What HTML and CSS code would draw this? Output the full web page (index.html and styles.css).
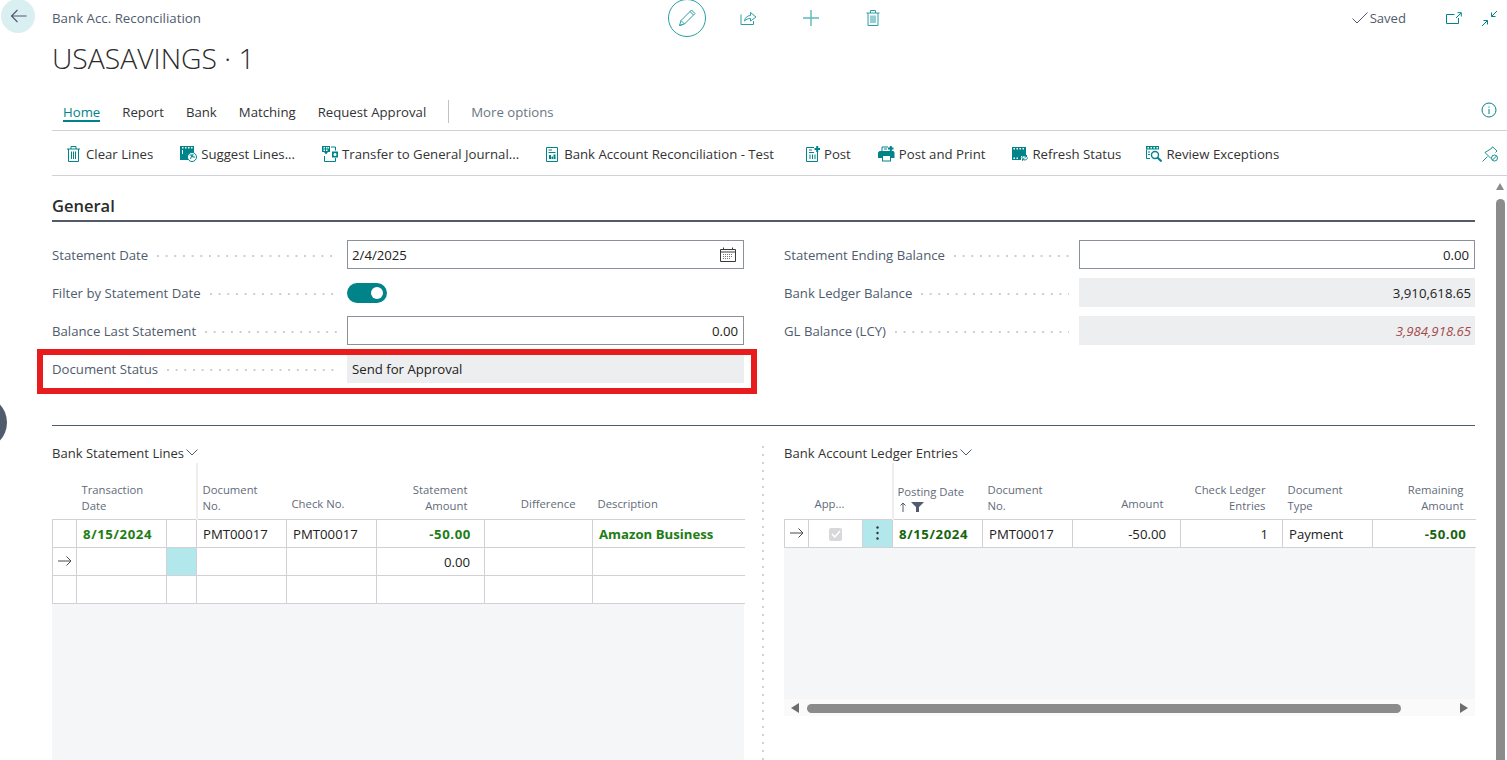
FILE: index.html
```html
<!DOCTYPE html>
<html lang="en">
<head>
<meta charset="utf-8">
<title>Bank Acc. Reconciliation</title>
<link rel="stylesheet" href="styles.css">
</head>
<body>
<div class="page">
  <aside class="gutter">
    <button class="back" aria-label="Back">
      <svg width="17" height="14" viewBox="0 0 17 14" fill="none" stroke="#505c6d" stroke-width="1.2"><path d="M16.500 7H1.500M7.500 1 1.500 7l6 6"/></svg>
    </button>
  </aside>
  <main class="main">
    <header class="top">
      <div class="crumb">Bank Acc. Reconciliation</div>
      <div class="top-actions">
        <span class="edit">
          <svg width="20" height="20" viewBox="0 0 20 20" fill="none" stroke="#2a9ea3" stroke-width="1"><path d="M2.500 17.500 4 12.500 14.500 2 18 5.500 7.500 16ZM4 12.500 7.500 16M13 3.500 16.500 7M2.500 17.500 5 16.800"/></svg>
        </span>
        <svg class="ta-share" width="17" height="16" viewBox="0 0 17 16" fill="none" stroke="#2a9ea3" stroke-width="1"><path d="M1 4.500V14.500H13.500V11M4.500 11C5 7.500 7.500 5.500 10.500 5.500V2.500L16 7 10.500 11V8.500C8 8.500 6 9.300 4.500 11Z"/></svg>
        <svg class="ta-plus" width="16" height="16" viewBox="0 0 16 16" fill="none" stroke="#5cb8bb" stroke-width="1.4"><path d="M8 0V16M0 8H16"/></svg>
        <svg class="ta-trash" width="14" height="16" viewBox="0 0 14 16" fill="none" stroke="#2a9ea3" stroke-width="1"><path d="M.5 3H13.500M4.500 3V.5H9.500V3M2 3V15.500H12V3M5 5.500V13M7 5.500V13M9 5.500V13"/></svg>
      </div>
      <div class="top-right">
        <span class="saved">
          <svg width="16" height="12" viewBox="0 0 16 12" fill="none" stroke="#505c6d" stroke-width="1"><path d="M.5 6.500 5 11 15.500 .5"/></svg>
          Saved
        </span>
        <svg class="tr-open" width="16" height="12" viewBox="0 0 16 12" fill="none" stroke="#008489" stroke-width="1"><path d="M8.500 2.500H.5V11.500H12.500V6M10 6 15 1M11.500 .7H15.300V4.500"/></svg>
        <svg class="tr-collapse" width="17" height="17" viewBox="0 0 17 17" fill="none" stroke="#008489" stroke-width="1"><path d="M16 1 10.500 6.500M10.500 2.500V6.500H14.500M1 16 6.500 10.500M2.500 10.500H6.500V14.500"/></svg>
      </div>
    </header>

    <h1 class="title">USASAVINGS · 1</h1>

    <nav class="tabs">
      <a class="tab tab-on">Home</a>
      <a class="tab">Report</a>
      <a class="tab">Bank</a>
      <a class="tab">Matching</a>
      <a class="tab">Request Approval</a>
      <span class="tab-sep"></span>
      <a class="tab tab-more">More options</a>
      <svg class="info" width="16" height="16" viewBox="0 0 16 16" fill="none" stroke="#008489" stroke-width="1"><circle cx="8" cy="8" r="7"/><path d="M8 7V12M8 4.500V5.700"/></svg>
    </nav>

    <div class="actions">
      <a class="act act-wide">
        <svg width="13" height="16" viewBox="0 0 13 16" fill="none" stroke="#008489" stroke-width="1"><path d="M0 3H13M4 3V.5H9V3M1.500 3V15.500H11.500V3M4.500 5.500V13M6.500 5.500V13M8.500 5.500V13"/></svg>
        Clear Lines
      </a>
      <a class="act">
        <svg width="17" height="16" viewBox="0 0 17 16"><path fill="#008489" d="M0 0H14V11H9.500L8 14H0Z"/><path fill="#fff" d="M2 1H3.500V2.500H2ZM5 1H6.500V2.500H5ZM8 1H9.500V2.500H8ZM11 1H12.500V2.500H11ZM2 4H3V8H2Z"/><circle cx="12" cy="11" r="4.500" fill="#fff" stroke="#008489"/><path fill="none" stroke="#008489" d="M9.500 9H12L10.500 13M13 8 12.500 11H15"/></svg>
        Suggest Lines...
      </a>
      <a class="act">
        <svg width="16" height="16" viewBox="0 0 16 16"><path fill="#008489" d="M0 0H8V6H6L4 8.500 2 6H0Z"/><path fill="#fff" d="M1.500 1H3V2.500H1.500ZM4 1H5.500V2.500H4ZM6 1H7V2.500H6ZM1.500 3.500H3V5H1.500ZM4 3.500H5.500V5H4Z"/><path fill="none" stroke="#008489" d="M9 1H13.500V4.500M2.500 10V15.500H13.500V12"/><rect x="10" y="5.500" width="6" height="6" fill="#008489"/><circle cx="13" cy="8.500" r="1.500" fill="#fff"/></svg>
        Transfer to General Journal...
      </a>
      <a class="act act-wide act-bank">
        <svg width="12" height="15" viewBox="0 0 12 15" fill="none" stroke="#008489"><path d="M.5 .5H11.500V14.500H.5ZM2.500 3H6M2.500 5.500H9.500"/><path fill="#008489" stroke="none" d="M3 8H5V12H3ZM5.500 9.500H7V12H5.500ZM7.500 7.500H9.500V12H7.500Z"/></svg>
        Bank Account Reconciliation - Test
      </a>
      <a class="act">
        <svg width="14" height="16" viewBox="0 0 14 16" fill="none" stroke="#008489"><path d="M8 1.500H.5V15.500H11.500V6M3 4H6M3 6.500H8M4 8.500V13M6.500 8.500V13M9 8.500V13"/><path stroke-width="2" d="M8.500 3H14M11.200 0V6"/></svg>
        Post
      </a>
      <a class="act">
        <svg width="17" height="16" viewBox="0 0 17 16"><path fill="#008489" d="M0 6.500 1.500 5H15.500L16.500 6.500V12H13V15.500H4V12H0Z"/><path fill="#fff" d="M5 10H12V14.500H5Z"/><path fill="none" stroke="#008489" d="M4 5V1H10M6 3H9"/><path fill="none" stroke="#008489" stroke-width="2" d="M10 2.500H15.500M12.800 0V5"/></svg>
        Post and Print
      </a>
      <a class="act act-refresh">
        <svg width="16" height="14" viewBox="0 0 16 14"><path fill="#008489" d="M0 0H14V9H9V13H0Z"/><path fill="#fff" d="M1.500 1H3V2.500H1.500ZM4.500 1H6V2.500H4.500ZM7.500 1H9V2.500H7.500ZM10.500 1H12V2.500H10.500ZM1.500 10.500H3V12H1.500ZM4.500 10.500H6V12H4.500Z"/><path fill="none" stroke="#008489" d="M10 11C10 9 12 8 14.500 9.500M15.500 10.500C15.500 12.500 13 14 10.500 12M14.500 8V10H12.500M10.500 13.800V11.800H12.500"/></svg>
        Refresh Status
      </a>
      <a class="act">
        <svg width="16" height="16" viewBox="0 0 16 16"><path fill="#008489" d="M0 0H13V3.500H0Z"/><path fill="#fff" d="M1.500 1H3V2.500H1.500ZM4.500 1H6V2.500H4.500ZM7.500 1H9V2.500H7.500ZM10.500 1H12V2.500H10.500Z"/><path fill="none" stroke="#008489" d="M.5 3.500V12.500H4M2 6H4M2 8.500H4"/><circle cx="9" cy="9" r="3.500" fill="#fff" stroke="#008489" stroke-width="1.400"/><path fill="none" stroke="#008489" stroke-width="2" d="M11.500 11.500 15.500 15.500"/></svg>
        Review Exceptions
      </a>
      <svg class="pin" width="16" height="16" viewBox="0 0 16 16" fill="none" stroke="#008489" stroke-width=".9"><path d="M.5 15.500 5.500 10.500M3 6.500 9.500 2.500 10.500 .8 15 5 13.500 6.500M3 6.500 9 12.500"/><circle cx="12.500" cy="12" r="3"/><path d="M10.500 14 14.500 10"/></svg>
    </div>

    <section class="general">
      <h2 class="section-title">General</h2>
      <div class="fields">
        <div class="field-col">
          <div class="field">
            <label class="lbl"><span>Statement Date</span><i class="dots"></i></label>
            <div class="input">2/4/2025
              <svg class="cal" width="16" height="15" viewBox="0 0 16 15" fill="none" stroke="#3a3a3a"><path d="M.5 2.500H15.500V14.500H.5ZM.5 5H15.500M3.500 .5V3M12.500 .5V3"/><path stroke="#777" stroke-dasharray="1 1" d="M3 7.500H13M3 9.500H13M3 11.500H11"/></svg>
            </div>
          </div>
          <div class="field">
            <label class="lbl"><span>Filter by Statement Date</span><i class="dots"></i></label>
            <div class="toggle"><i class="knob"></i></div>
          </div>
          <div class="field">
            <label class="lbl"><span>Balance Last Statement</span><i class="dots"></i></label>
            <div class="input num">0.00</div>
          </div>
          <div class="field">
            <label class="lbl"><span>Document Status</span><i class="dots"></i></label>
            <div class="input ro">Send for Approval</div>
          </div>
        </div>
        <div class="field-col">
          <div class="field">
            <label class="lbl"><span>Statement Ending Balance</span><i class="dots"></i></label>
            <div class="input num">0.00</div>
          </div>
          <div class="field">
            <label class="lbl"><span>Bank Ledger Balance</span><i class="dots"></i></label>
            <div class="input ro num">3,910,618.65</div>
          </div>
          <div class="field">
            <label class="lbl"><span>GL Balance (LCY)</span><i class="dots"></i></label>
            <div class="input ro num warn">3,984,918.65</div>
          </div>
        </div>
      </div>
    </section>

    <hr class="rule">

    <section class="parts">
      <div class="part">
        <div class="part-title">Bank Statement Lines
          <svg width="12" height="7" viewBox="0 0 12 7" fill="none" stroke="#505c6d"><path d="M.5 .5 6 6 11.500 .5"/></svg>
        </div>
        <table class="grid grid-l">
          <colgroup>
            <col class="c24"><col class="c90"><col class="c30"><col class="c90"><col class="c90"><col class="c108"><col class="c108"><col class="c152">
          </colgroup>
          <thead>
            <tr>
              <th></th><th class="two">Transaction<br>Date</th><th class="freeze"></th><th class="two">Document<br>No.</th><th>Check No.</th><th class="r two">Statement<br>Amount</th><th class="r">Difference</th><th>Description</th>
            </tr>
          </thead>
          <tbody>
            <tr><td></td><td class="g d">8/15/2024</td><td></td><td>PMT00017</td><td>PMT00017</td><td class="r g d">-50.00</td><td></td><td class="g">Amazon Business</td></tr>
            <tr><td class="mark"><svg width="14" height="10" viewBox="0 0 14 10" fill="none" stroke="#4a4a4a"><path d="M0 5H13M8.500 .5 13 5 8.500 9.500"/></svg></td><td></td><td class="cy"></td><td></td><td></td><td class="r">0.00</td><td></td><td></td></tr>
            <tr><td></td><td></td><td></td><td></td><td></td><td></td><td></td><td></td></tr>
          </tbody>
        </table>
        <div class="fill fill-l"></div>
      </div>
      <div class="vsep"></div>
      <div class="part">
        <div class="part-title">Bank Account Ledger Entries
          <svg width="12" height="7" viewBox="0 0 12 7" fill="none" stroke="#505c6d"><path d="M.5 .5 6 6 11.500 .5"/></svg>
        </div>
        <table class="grid grid-r">
          <colgroup>
            <col class="c24"><col class="c54"><col class="c30"><col class="c90"><col class="c90"><col class="c108"><col class="c102"><col class="c90"><col class="c103">
          </colgroup>
          <thead>
            <tr>
              <th></th><th class="app">App...</th><th class="freeze"></th><th class="two pd">Posting Date<br><span class="sort"><svg width="6" height="10" viewBox="0 0 6 10" fill="none" stroke="#505c6d"><path d="M3 10V1M.5 3.500 3 1 5.500 3.500"/></svg><svg width="13" height="10" viewBox="0 0 13 10"><path fill="#505c6d" d="M0 0H13L8 5V10H5V5Z"/></svg></span></th><th class="two">Document<br>No.</th><th class="r">Amount</th><th class="r two">Check Ledger<br>Entries</th><th class="two">Document<br>Type</th><th class="r two last">Remaining<br>Amount</th>
            </tr>
          </thead>
          <tbody>
            <tr><td class="mark"><svg width="14" height="10" viewBox="0 0 14 10" fill="none" stroke="#4a4a4a"><path d="M0 5H13M8.500 .5 13 5 8.500 9.500"/></svg></td><td class="chk"><span class="box"><svg width="10" height="8" viewBox="0 0 10 8" fill="none" stroke="#fff" stroke-width="1.500"><path d="M1 4 3.800 7 9 1"/></svg></span></td><td class="cy kebab"><svg width="3" height="14" viewBox="0 0 3 14"><circle cx="1.500" cy="1.500" r="1.200" fill="#333"/><circle cx="1.500" cy="7" r="1.200" fill="#333"/><circle cx="1.500" cy="12.500" r="1.200" fill="#333"/></svg></td><td class="g dk d">8/15/2024</td><td>PMT00017</td><td class="r">-50.00</td><td class="r">1</td><td>Payment</td><td class="r g dk d last">-50.00</td></tr>
          </tbody>
        </table>
        <div class="fill fill-r"></div>
        <div class="hbar">
          <i class="arr arr-l"></i>
          <i class="hthumb"></i>
          <i class="arr arr-r"></i>
        </div>
      </div>
    </section>
  </main>

  <div class="redbox"></div>
  <div class="bubble"></div>
  <div class="vbar"><i class="vup"></i><i class="vthumb"></i></div>
</div>
</body>
</html>
```
FILE: styles.css
```css
* { box-sizing: border-box; }
html, body { margin: 0; padding: 0; height: 760px; overflow: hidden; background: #fff; }
body { font-family: "Open Sans", "Noto Sans", sans-serif; font-size: 13.2px; color: #212121; }
.page { position: relative; display: flex; width: 1507px; height: 760px; overflow: hidden; }
.gutter { width: 52px; flex: none; }
.back { display: flex; align-items: center; justify-content: center; width: 34px; height: 34px; margin: -1px 0 0 1px; padding: 0; border: 0; border-radius: 50%; background: #d9eff2; }
.main { width: 1423px; flex: none; display: flex; flex-direction: column; }

.top { display: flex; align-items: center; height: 36px; position: relative; }
.crumb { width: 616px; color: #505c6d; font-size: 13.3px; }
.top-actions { display: flex; align-items: center; }
.edit { display: flex; align-items: center; justify-content: center; width: 38px; height: 38px; border: 1px solid #2a9ea3; border-radius: 50%; margin-top: -1px; }
.ta-share { margin-left: 34px; }
.ta-plus { margin-left: 46px; }
.ta-trash { margin-left: 47px; }
.top-right { margin-left: auto; display: flex; align-items: center; }
.saved { display: flex; align-items: center; gap: 2px; color: #505c6d; margin-right: 40px; font-size: 13.1px; }
.tr-open { margin-right: 19px; }
.tr-collapse { margin-right: -23px; }

.title { margin: 6px 0 0; height: 34px; line-height: 32px; font-size: 28.300px; font-weight: 300; color: #2b2b2b; }

.tabs { display: flex; align-items: flex-start; height: 31px; margin-top: 24px; padding-left: 11px; border-bottom: 1px solid #d1d1d6; gap: 22px; width: 1455px; }
.tab { line-height: 24px; height: 22px; color: #333; }
.tab-on { color: #008489; border-bottom: 2px solid #008489; }
.tab-sep { width: 1px; height: 23px; background: #bfc3c9; }
.tab-more { color: #6b7685; }
.info { margin-left: auto; margin-top: 2px; margin-right: 10px; }

.actions { display: flex; align-items: center; height: 45px; padding: 2px 0 0 15px; gap: 27px; border-bottom: 1px solid #d1d1d6; width: 1455px; }
.act { display: flex; align-items: center; gap: 4px; color: #333; white-space: nowrap; }
.act-wide { gap: 6px; }
.act-bank { margin-right: 5px; }
.act-refresh { margin-right: -2px; }
.pin { margin-left: auto; margin-right: 9px; }

.general { padding-top: 19px; }
.section-title { margin: 0; height: 27px; line-height: 22px; font-size: 16.5px; font-weight: 600; color: #2b2b2b; border-bottom: 2px solid #505c6d; }
.fields { display: flex; gap: 40px; padding-top: 13px; height: 203px; }
.field-col { width: 692px; display: flex; flex-direction: column; }
.field-col + .field-col { width: 691px; }
.field { display: flex; align-items: center; height: 38px; flex: none; }
.lbl { width: 295px; display: flex; align-items: center; color: #505c6d; flex: none; padding: 2px 10px 0 0; white-space: nowrap; }
.dots { flex: 1; height: 2px; margin-left: 9px; margin-top: 2px; background-image: radial-gradient(circle at 1px 1px, #cdcdcd 1px, transparent 1px); background-size: 8.67px 2px; }
.input { position: relative; flex: 1; height: 29px; line-height: 29px; padding: 0 4px; border: 1px solid #8a9198; color: #212121; }
.num { text-align: right; padding-right: 5px; }
.ro { background: #edeef0; border-color: #edeef0; }
.ro.num { padding-right: 3px; }
.warn { color: #a44a4a; font-style: italic; }
.cal { position: absolute; right: 7px; top: 6px; }
.toggle { display: flex; align-items: center; justify-content: flex-end; width: 40px; height: 20px; margin-top: 2px; border-radius: 10px; background: #008489; padding-right: 4px; }
.knob { width: 12px; height: 12px; border-radius: 50%; background: #fff; }

.rule { margin: 0; border: 0; border-top: 1px solid #505c6d; flex: none; }

.parts { display: flex; height: 334px; }
.part { width: 692px; flex: none; display: flex; flex-direction: column; }
.part + .vsep + .part { width: 691px; }
.vsep { width: 40px; flex: none; margin-top: 20px; background: linear-gradient(#d2d2d2 25%, transparent 25%) 18px 0 / 2px 8px repeat-y; }
.part-title { display: flex; align-items: center; gap: 2px; height: 37px; padding-top: 16px; font-size: 13.05px; color: #333; flex: none; white-space: nowrap; }

.grid { border-collapse: collapse; table-layout: fixed; width: 100%; flex: none; }
.c24 { width: 24px; } .c30 { width: 30px; } .c54 { width: 54px; } .c90 { width: 90px; } .c102 { width: 102px; } .c103 { width: 103px; } .c108 { width: 108px; } .c152 { width: 152px; }
.grid th { height: 56px; padding: 0 5px 7px; font-size: 11.3px; line-height: 16px; font-weight: 400; color: #5f6b7a; text-align: left; vertical-align: bottom; border-bottom: 1px solid #d1d1d6; white-space: nowrap; }
.grid th.two { padding-bottom: 5px; }
.grid th.pd { padding-left: 4px; }
.grid th.r { text-align: right; padding-right: 17px; }
.grid th.r.last { padding-right: 12px; }
.grid th.freeze { border-right: 2px solid #eeeeef; }
.grid th.app { padding: 0 0 7px 6px; }
.grid td { height: 28px; padding: 2px 6px 0; border: 1px solid #d1d1d6; white-space: nowrap; overflow: hidden; }
.grid tr td:last-child { border-right: 0; }
.grid td.r { text-align: right; padding-right: 14px; }
.grid td.r.g { padding-right: 13px; }
.grid td.r.last { padding-right: 9px; }
.grid td.g { color: #1e7d14; font-weight: 700; }
.grid td.d { letter-spacing: .6px; }
.grid td.dk { color: #17650f; }
.grid td.cy { background: #b2e8ec; }
.grid td.mark { padding: 0 0 0 5px; line-height: 0; }
.grid td.chk { text-align: center; line-height: 0; }
.grid td.kebab { text-align: center; line-height: 0; padding: 0; }
.box { display: inline-flex; align-items: center; justify-content: center; width: 13px; height: 13px; border-radius: 2px; background: #d8d8da; }
.sort { display: flex; align-items: center; gap: 5px; height: 14px; margin-left: 2px; }
.fill { background: #f5f6f8; flex: none; }
.fill-l { height: 157px; }
.fill-r { height: 151px; }
.hbar { display: flex; align-items: center; height: 17px; flex: none; padding: 2px 0 0 7px; background: #fafafa; }
.arr { width: 0; height: 0; border-style: solid; border-color: transparent; }
.arr-l { border-width: 5px 8px 5px 0; border-right-color: #6d6d6d; }
.hthumb { width: 594px; height: 9px; border-radius: 5px; background: #8b8b8b; margin-left: 8px; }
.arr-r { border-width: 5px 0 5px 8px; border-left-color: #6d6d6d; margin-left: 59px; }

.redbox { position: absolute; left: 37px; top: 349px; width: 720px; height: 45px; border: 6px solid #e81c1c; pointer-events: none; }
.bubble { position: absolute; left: -46px; top: 396px; width: 53px; height: 53px; border-radius: 50%; background: #505c6d; }
.vbar { position: absolute; left: 1496px; top: 183px; width: 9px; height: 577px; }
.vup { display: block; width: 0; height: 0; border-style: solid; border-width: 0 4.500px 7px; border-color: transparent transparent #8b8b8b; }
.vthumb { display: block; width: 9px; height: 570px; margin-top: 9px; border-radius: 5px 5px 0 0; background: #8b8b8b; }
```
